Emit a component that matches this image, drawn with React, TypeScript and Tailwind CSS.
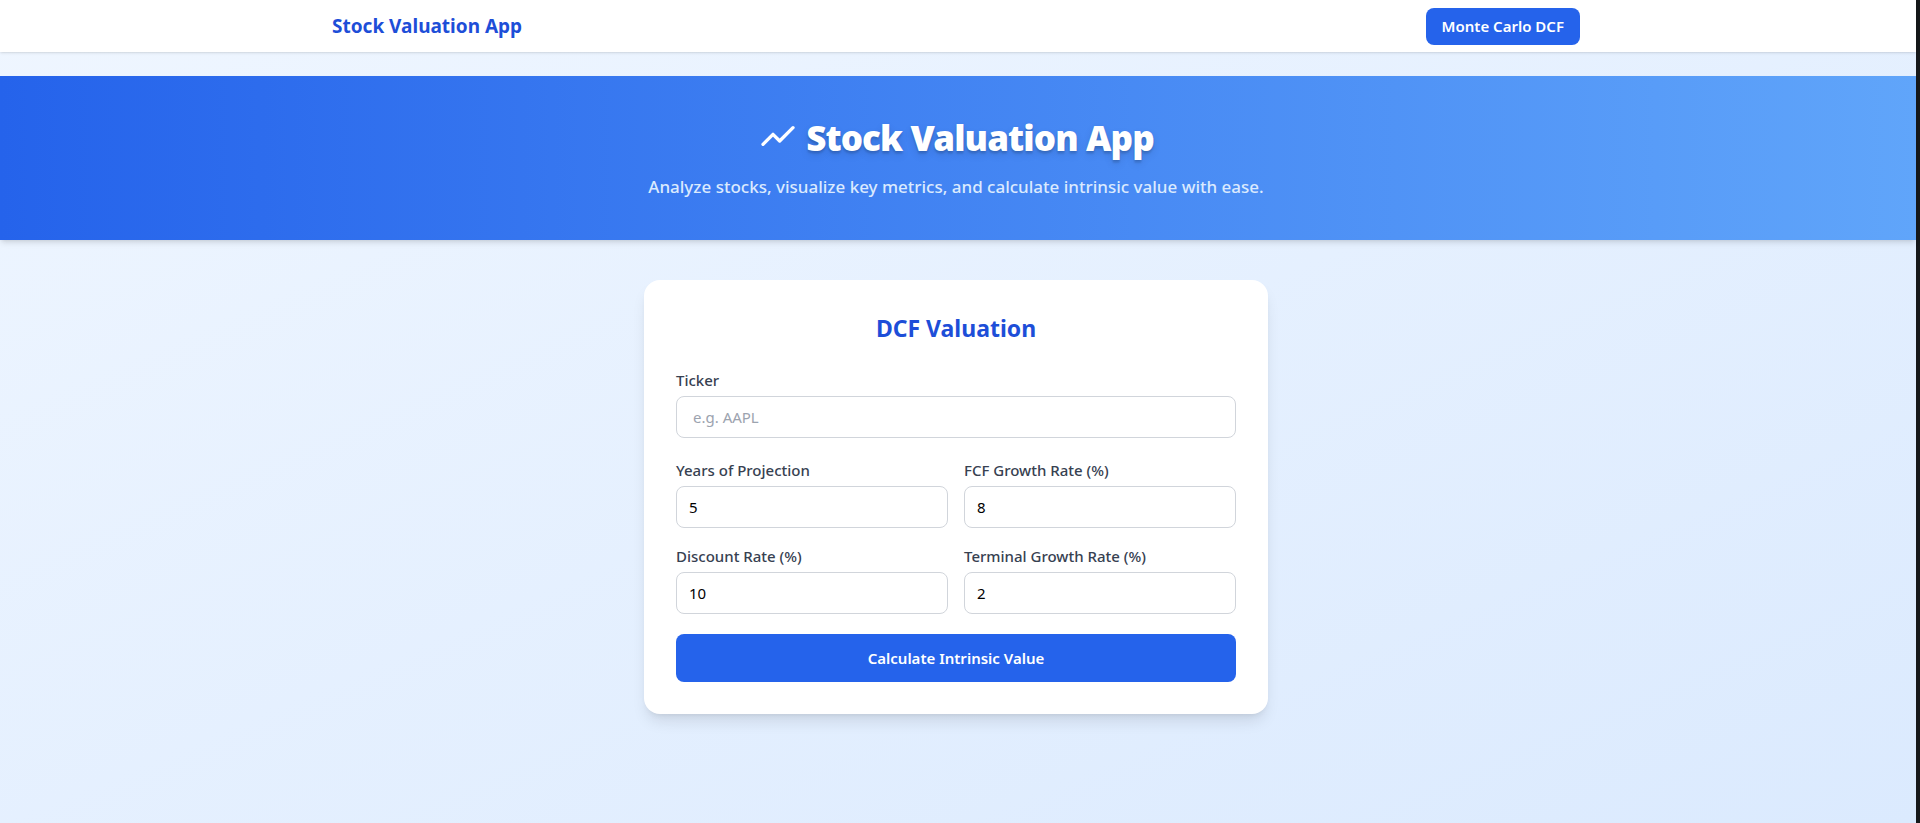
import { useState } from "react";

type FieldProps = {
  id: string;
  label: string;
  value: string;
  onChange: (value: string) => void;
};

function NumberField({ id, label, value, onChange }: FieldProps) {
  return (
    <div>
      <label htmlFor={id} className="mb-1 block leading-6 font-medium text-[#374151]">
        {label}
      </label>
      <input
        id={id}
        type="number"
        value={value}
        onChange={(e) => onChange(e.target.value)}
        className="block h-[42px] w-full rounded-lg border border-[#d1d5db] bg-white px-3 text-black"
      />
    </div>
  );
}

function TrendIcon() {
  return (
    <svg
      className="mb-1 size-10 shrink-0"
      viewBox="0 0 24 24"
      fill="none"
      stroke="currentColor"
      strokeWidth="2"
      strokeLinecap="round"
      strokeLinejoin="round"
      aria-hidden="true"
    >
      <path d="M3 17l6-6 4 4 8-8" />
    </svg>
  );
}

export default function App() {
  const [ticker, setTicker] = useState("");
  const [years, setYears] = useState("5");
  const [growth, setGrowth] = useState("8");
  const [discount, setDiscount] = useState("10");
  const [terminal, setTerminal] = useState("2");

  return (
    <div className="min-h-screen border-r-4 border-[#16181a] bg-linear-to-br/srgb from-[#eff6ff] to-[#dbeafe] font-['Noto_Sans',sans-serif] text-[15px]">
      <nav className="mb-6 bg-white pr-1 shadow-sm">
        <div className="mx-auto flex h-[52px] max-w-7xl items-center justify-between px-4">
          <a href="#" className="text-[19px] font-bold text-[#1d4ed8]">
            Stock Valuation App
          </a>
          <a href="#monte-carlo" className="rounded-lg bg-[#2563eb] px-4 py-2 leading-[21px] font-semibold text-white">
            Monte Carlo DCF
          </a>
        </div>
      </nav>

      <header className="bg-linear-to-r/srgb from-[#2563eb] to-[#60a5fa] py-10 pr-1 text-center shadow-md">
        <h1 className="mb-3.5 flex items-center justify-center gap-2 text-[35px] leading-[44px] font-black tracking-tight text-white">
          <TrendIcon />
          <span className="text-shadow-lg">Stock Valuation App</span>
        </h1>
        <p className="text-[17px] leading-[26px] font-medium text-[#dbeafe]">
          Analyze stocks, visualize key metrics, and calculate intrinsic value with ease.
        </p>
      </header>

      <main className="py-10 pr-1">
        <form
          onSubmit={(e) => e.preventDefault()}
          className="mx-auto max-w-[624px] rounded-2xl bg-white p-8 shadow-lg"
        >
          <h2 className="mb-6 text-center text-[23px] leading-8 font-bold text-[#1d4ed8]">DCF Valuation</h2>
          <div className="mb-5">
            <label htmlFor="ticker" className="mb-1 block leading-6 font-medium text-[#374151]">
              Ticker
            </label>
            <input
              id="ticker"
              type="text"
              placeholder="e.g. AAPL"
              value={ticker}
              onChange={(e) => setTicker(e.target.value)}
              className="block h-[42px] w-full rounded-lg border border-[#d1d5db] bg-white px-4 text-black placeholder:text-[#9ca3af]"
            />
          </div>
          <div className="grid grid-cols-2 gap-4">
            <NumberField id="years" label="Years of Projection" value={years} onChange={setYears} />
            <NumberField id="growth" label="FCF Growth Rate (%)" value={growth} onChange={setGrowth} />
            <NumberField id="discount" label="Discount Rate (%)" value={discount} onChange={setDiscount} />
            <NumberField id="terminal" label="Terminal Growth Rate (%)" value={terminal} onChange={setTerminal} />
          </div>
          <button type="submit" className="mt-5 h-12 w-full rounded-lg bg-[#2563eb] font-semibold text-white">
            Calculate Intrinsic Value
          </button>
        </form>
      </main>
    </div>
  );
}
